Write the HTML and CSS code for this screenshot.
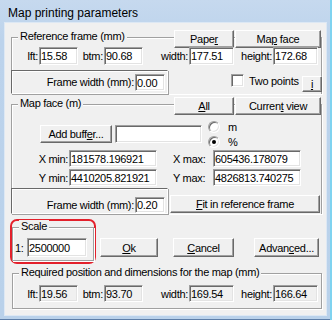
FILE: index.html
```html
<!DOCTYPE html>
<html>
<head>
<meta charset="utf-8">
<title>Map printing parameters</title>
<link rel="stylesheet" href="styles.css">
</head>
<body>
<div class="window">
  <div class="titlebar">Map printing parameters</div>
  <div class="client">

    <div class="group g-ref">
      <div class="ghead">
        <span class="legend">Reference frame (mm)</span>
        <span class="btn w60 push"><span>Pape<u>r</u></span></span>
        <span class="btn w86 gap1"><span>Ma<u>p</u> face</span></span>
      </div>
      <div class="row r-coords">
        <span class="lbl c27">lft:</span><span class="field w39">15.58</span>
        <span class="lbl c26">btm:</span><span class="field w39">90.68</span>
        <span class="lbl c46">width:</span><span class="field w45">177.51</span>
        <span class="lbl c39">height:</span><span class="field w45">172.68</span>
      </div>
      <div class="row r-frame">
        <div class="panel p1">
          <span class="lbl c123">Frame width (mm):</span><span class="field w30 h17">0.00</span>
        </div>
        <span class="check"><span class="cbox"></span><span>Two points</span></span>
        <span class="btn b-i"><span><u>i</u></span></span>
      </div>
    </div>

    <div class="group g-map">
      <div class="ghead">
        <span class="legend">Map face (m)</span>
        <span class="btn w60 push"><span><u>A</u>ll</span></span>
        <span class="btn w86 gap1"><span>Curren<u>t</u> view</span></span>
      </div>
      <div class="row r-buf">
        <span class="btn b-buf"><span>Add buff<u>e</u>r...</span></span>
        <span class="field b-text"></span>
        <div class="radios">
          <span class="radio"><span class="rb"></span><span class="rt">m</span></span>
          <span class="radio"><span class="rb on"></span><span class="rt">%</span></span>
        </div>
      </div>
      <div class="row r-min">
        <span class="lbl c57">X min:</span><span class="field w88 h17">181578.196921</span>
        <span class="lbl c56 left">X max:</span><span class="field w88 h17">605436.178079</span>
      </div>
      <div class="row r-min">
        <span class="lbl c57">Y min:</span><span class="field w88 h17">4410205.821921</span>
        <span class="lbl c56 left">Y max:</span><span class="field w88 h17">4826813.740275</span>
      </div>
      <div class="row r-frame2">
        <div class="panel p2">
          <span class="lbl c123">Frame width (mm):</span><span class="field w30 h16">0.20</span>
        </div>
        <span class="btn b-fit"><span><u>F</u>it in reference frame</span></span>
      </div>
    </div>

    <div class="row r-bottom">
      <div class="mark">
        <div class="group g-scale">
          <div class="ghead"><span class="legend">Scale</span></div>
          <div class="row r-scale">
            <span class="lbl c14 left">1:</span><span class="field w60 h19">2500000</span>
          </div>
        </div>
      </div>
      <span class="btn b-ok"><span><u>O</u>k</span></span>
      <span class="btn b-cancel"><span><u>C</u>ancel</span></span>
      <span class="btn b-adv"><span>Advan<u>c</u>ed...</span></span>
    </div>

    <div class="group g-req">
      <div class="ghead"><span class="legend">Required position and dimensions for the map (mm)</span></div>
      <div class="row r-req">
        <span class="lbl c26">lft:</span><span class="field ro w39 h17">19.56</span>
        <span class="lbl c26">btm:</span><span class="field ro w39 h17">93.70</span>
        <span class="lbl c46">width:</span><span class="field ro w45 h17">169.54</span>
        <span class="lbl c39">height:</span><span class="field ro w45 h17">166.64</span>
      </div>
    </div>

  </div>
</div>
</body>
</html>
```
FILE: styles.css
```css
* {
  box-sizing: border-box;
  margin: 0;
  padding: 0;
}

html, body {
  width: 332px;
  height: 320px;
  overflow: hidden;
}

body {
  font-family: "Liberation Sans", Arial, sans-serif;
  font-size: 11px;
  letter-spacing: -0.3px;
  color: #000;
  background: #b9d1ea;
}

u {
  text-decoration: underline;
  text-underline-offset: 1px;
}

.window {
  width: 332px;
  height: 320px;
  display: flex;
  flex-direction: column;
  padding: 0 6px 5px 5px;
  background: linear-gradient(to bottom, #c6d9ee, #bcd3ec 40px, #b9d1ea);
  box-shadow: inset -2px 0 0 #7fd3f0, inset 0 -1px 0 #5d7ea8;
}

.titlebar {
  height: 23px;
  flex: none;
  padding: 4px 0 0 3px;
  line-height: 19px;
  font-size: 12px;
  letter-spacing: 0;
  color: #000;
}

.client {
  flex: 1;
  background: #f0f0f0;
  padding-left: 6px;
  display: flex;
  flex-direction: column;
  box-shadow: 0 0 0 1px #dde8f4;
}

/* group boxes */
.group {
  border: 1px solid #a0a0a0;
  box-shadow: 1px 1px 0 #fff, inset 1px 1px 0 #fff;
  display: flex;
  flex-direction: column;
}

.ghead {
  display: flex;
  align-items: flex-start;
  margin-top: -8px;
}

.legend {
  margin-left: 6px;
  padding: 0 2px;
  background: #f0f0f0;
  height: 13px;
  line-height: 13px;
  white-space: nowrap;
}

.row {
  display: flex;
}

.g-ref {
  width: 311px;
  margin-top: 14px;
  border-bottom: none;
}

.g-map {
  width: 311px;
  margin-top: 10px;
  border-bottom: none;
}

/* buttons */
.btn {
  display: flex;
  align-items: center;
  justify-content: center;
  height: 18px;
  flex: none;
  background: #f0f0f0;
  border: 1px solid;
  border-color: #fff #696969 #696969 #fff;
  box-shadow: inset -1px -1px 0 #a0a0a0;
  white-space: nowrap;
}

.push { margin-left: auto; }
.gap1 { margin-left: 1px; }
.w60 { width: 60px; }
.w86 { width: 86px; }

/* fields */
.field {
  display: flex;
  align-items: center;
  height: 18px;
  flex: none;
  padding-left: 1px;
  background: #fff;
  border: 1px solid;
  border-color: #a0a0a0 #fff #fff #a0a0a0;
  box-shadow: inset 1px 1px 0 #696969, inset -1px -1px 0 #e3e3e3;
  white-space: nowrap;
  overflow: hidden;
}

.field.ro { background: #f0f0f0; }
.w30 { width: 30px; }
.w39 { width: 39px; }
.w45 { width: 45px; }
.w88 { width: 88px; }
.h16 { height: 16px; }
.h17 { height: 17px; }
.h19 { height: 19px; }

/* labels */
.lbl {
  flex: none;
  text-align: right;
  padding-right: 1px;
  white-space: nowrap;
}

.lbl.left {
  text-align: left;
  padding-right: 0;
}

.c14 { width: 14px; padding-left: 2px; }
.c26 { width: 26px; }
.c27 { width: 27px; }
.c39 { width: 39px; }
.c46 { width: 46px; }
.c56 { width: 56px; padding-left: 16px; }
.c57 { width: 57px; }
.c123 { width: 123px; }

/* reference frame rows */
.r-coords {
  margin-top: -1px;
  height: 18px;
  align-items: center;
}

.r-frame {
  margin-top: 5px;
  height: 24px;
  align-items: flex-start;
}

.panel {
  display: flex;
  align-items: flex-start;
  margin-left: -1px;
  width: 157px;
  border: 1px solid;
  border-color: #696969 #fff #fff #696969;
  box-shadow: inset 1px 1px 0 #fff, 1px 1px 0 #a0a0a0;
  background: #f0f0f0;
}

.panel .lbl { line-height: 17px; }

.p1 {
  height: 24px;
  padding-top: 3px;
}

.p2 {
  height: 26px;
  padding-top: 8px;
}

.p2 .lbl { line-height: 16px; }

.check {
  display: flex;
  align-items: center;
  margin-left: 63px;
  margin-top: 4px;
  height: 13px;
  white-space: nowrap;
}

.cbox {
  width: 13px;
  height: 13px;
  margin-right: 5px;
  background: #fff;
  border: 1px solid;
  border-color: #a0a0a0 #fff #fff #a0a0a0;
  box-shadow: inset 1px 1px 0 #696969, inset -1px -1px 0 #e3e3e3;
}

.b-i {
  width: 20px;
  height: 16px;
  margin-left: auto;
  margin-right: -1px;
  margin-top: 6px;
}

/* map face rows */
.r-buf {
  margin-top: 5px;
  height: 28px;
  align-items: center;
}

.b-buf {
  width: 72px;
  margin-left: 28px;
}

.b-text {
  width: 87px;
  margin-left: 3px;
}

.radios {
  display: flex;
  flex-direction: column;
  gap: 3px;
  margin-left: 6px;
}

.radio {
  display: flex;
  align-items: center;
  height: 12px;
}

.rb {
  position: relative;
  width: 12px;
  height: 12px;
  border-radius: 50%;
  background: #fff;
  border: 1px solid;
  border-color: #a0a0a0 #fff #fff #a0a0a0;
  box-shadow: inset 1px 1px 0 #696969, inset -1px -1px 0 #e3e3e3;
}

.rb.on::after {
  content: "";
  position: absolute;
  left: 3px;
  top: 3px;
  width: 4px;
  height: 4px;
  border-radius: 50%;
  background: #000;
}

.rt { margin-left: 8px; }

.r-min {
  margin-top: 2px;
  height: 17px;
  align-items: center;
}

.r-frame2 {
  margin-top: 2px;
  align-items: flex-start;
}

.b-fit {
  width: 150px;
  margin-left: 2px;
  margin-top: 7px;
}

/* bottom row */
.r-bottom {
  margin-top: 5px;
  margin-left: -1px;
  align-items: flex-start;
}

.mark {
  width: 86px;
  height: 45px;
  border: 2px solid #e3202b;
  border-radius: 7px;
  padding-top: 6px;
  flex: none;
}

.g-scale {
  width: 82px;
  height: 34px;
}

.r-scale {
  margin-top: 5px;
  align-items: center;
}

.b-ok {
  width: 58px;
  height: 19px;
  margin-left: 4px;
  margin-top: 19px;
}

.b-cancel {
  width: 61px;
  height: 19px;
  margin-left: 15px;
  margin-top: 19px;
}

.b-adv {
  width: 65px;
  height: 19px;
  margin-left: 20px;
  margin-top: 19px;
}

.g-req {
  width: 310px;
  height: 36px;
  margin-top: 9px;
  margin-left: 1px;
}

.r-req {
  margin-top: 6px;
  align-items: center;
}
```
